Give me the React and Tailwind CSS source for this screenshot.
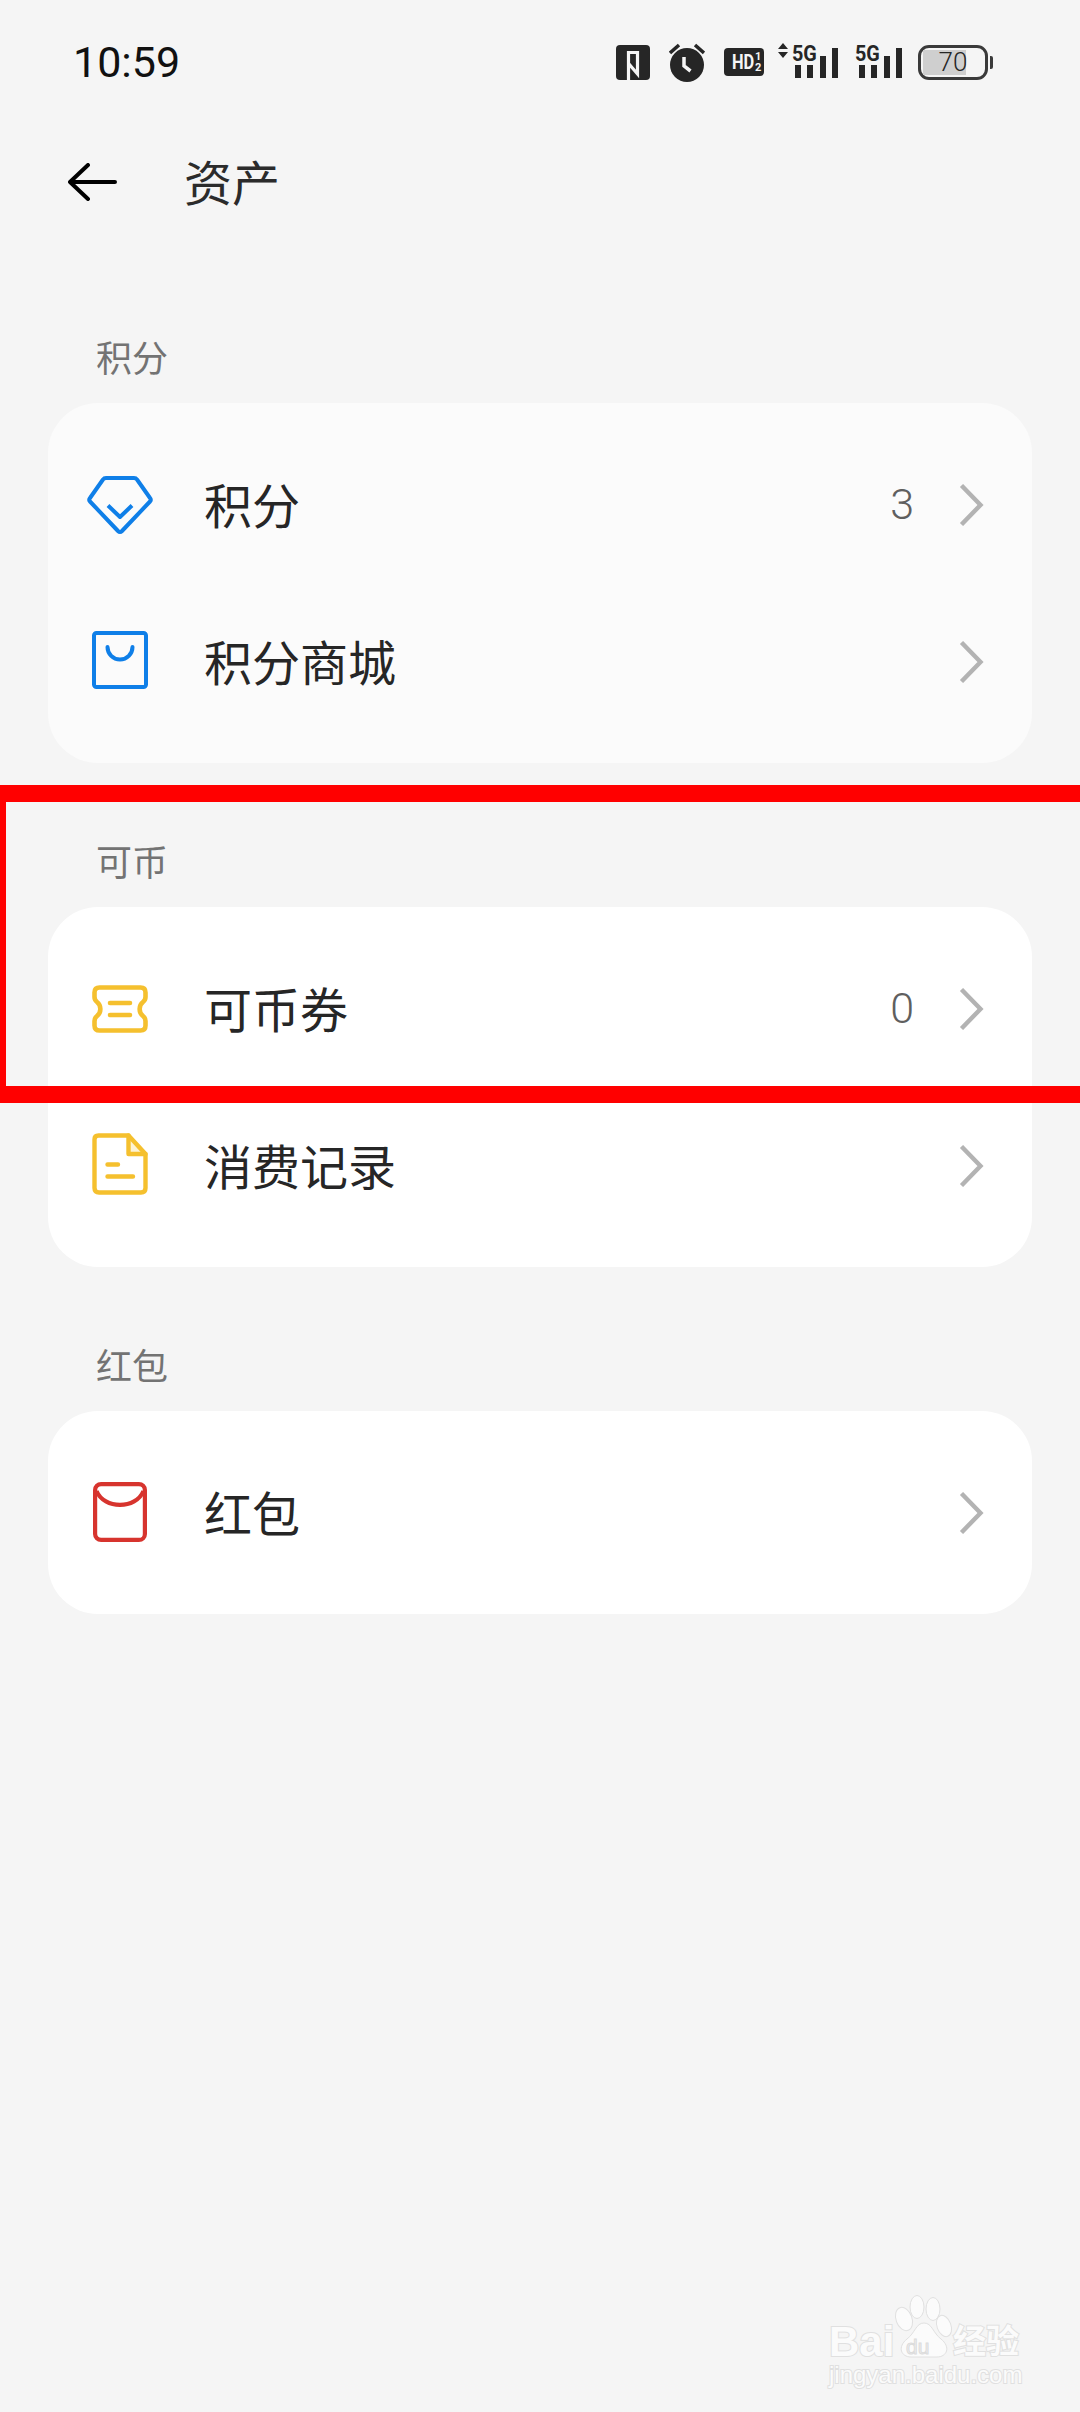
const cjk = "font-['Noto_Sans_CJK_SC','Noto_Sans',sans-serif]";

function Chevron() {
  return (
    <svg width="26" height="42" viewBox="0 0 26 42" fill="none" stroke="#b3b3b3" strokeWidth="4.4" className="shrink-0">
      <path d="M2.5 1.500 L21.500 21 L2.500 40.500" />
    </svg>
  );
}

function Diamond() {
  return (
    <svg width="66" height="58" viewBox="0 0 66 58" fill="none" stroke="#0f7fe8" strokeWidth="4" strokeLinejoin="round" strokeLinecap="round">
      <path d="M19 2 H47 Q49 2 50 3.500 L63 22 Q64.500 24 63 25.500 L35 55 Q33 57 31 55 L3 25.500 Q1.500 24 3 22 L16 3.500 Q17 2 19 2 Z" />
      <path d="M21 29.500 L33 41 L45 29.500" strokeLinecap="butt" />
    </svg>
  );
}

function Bag() {
  return (
    <svg width="56" height="58" viewBox="0 0 56 58" fill="none" stroke="#0f7fe8" strokeWidth="4" strokeLinejoin="round" className="mb-[4px]">
      <rect x="2" y="2" width="52" height="54" rx="2.500" />
      <path d="M15.500 16 A12.500 12.500 0 0 0 40.500 16" strokeLinecap="round" />
    </svg>
  );
}

function Ticket() {
  return (
    <svg width="56" height="48" viewBox="0 0 56 48" fill="none" stroke="#f5c02e" strokeWidth="4.600" strokeLinejoin="round" strokeLinecap="round">
      <path d="M7.500 2.500 H48.500 Q53.500 2.500 53.500 7.500 V12 Q53.500 15 51 17 C46.500 20.500 46.500 27.500 51 31 Q53.500 33 53.500 36 V40.500 Q53.500 45.500 48.500 45.500 H7.500 Q2.500 45.500 2.500 40.500 V36 Q2.500 33 5 31 C9.500 27.500 9.500 20.500 5 17 Q2.500 15 2.500 12 V7.500 Q2.500 2.500 7.500 2.500 Z" />
      <path d="M18 18 H38 M18 30 H38" />
    </svg>
  );
}

function Doc() {
  return (
    <svg width="56" height="62" viewBox="0 0 56 62" fill="none" stroke="#f5c02e" strokeWidth="4.400" strokeLinejoin="round" strokeLinecap="round" className="mb-[4px]">
      <path d="M36.500 2.500 L53.500 21 H36.500 Z" fill="#fdf3d3" stroke="none" />
      <path d="M6.500 2.500 H36.500 L53.500 21 V55 Q53.500 59.500 49 59.500 H7 Q2.500 59.500 2.500 55 V6.500 Q2.500 2.500 6.500 2.500 Z" />
      <path d="M36.500 2.500 V21 H53.500" />
      <path d="M15.500 31.500 H26 M15.500 43.500 H41" />
    </svg>
  );
}

function Envelope() {
  return (
    <svg width="54" height="60" viewBox="0 0 54 60" fill="none" stroke="#d7342e" strokeWidth="4.200" strokeLinejoin="round" className="mb-[2px]">
      <rect x="2.100" y="2.100" width="49.800" height="55.800" rx="6" />
      <path d="M3.500 9 C11 27.500 43 27.500 50.500 9" />
    </svg>
  );
}

function Row({ icon, label, value }) {
  return (
    <div className="flex h-[157px] items-center">
      <div className="mr-[12px] flex w-[144px] shrink-0 justify-center">{icon}</div>
      <span className={`${cjk} mb-[4px] text-[48px] leading-none text-[#262626]`}>{label}</span>
      {value !== undefined && (
        <span className="ml-auto mr-[45px] font-['Roboto',sans-serif] text-[43px] font-light leading-none text-[#5f5f5f]">{value}</span>
      )}
      <div className={`mr-[47px] flex items-center ${value === undefined ? "ml-auto" : ""}`}><Chevron /></div>
    </div>
  );
}

function Section({ title, children, tone = "bg-white" }) {
  return (
    <section>
      <div className={`${cjk} flex h-[48px] items-center pb-[3px] pl-[96px] text-[36px] leading-none text-[#737373]`}>{title}</div>
      <div className={`mx-[48px] mt-[22px] rounded-[50px] py-[23px] ${tone}`}>{children}</div>
    </section>
  );
}

function Signal({ className }) {
  return (
    <div className={`relative h-[31px] ${className}`}>
      <span className="absolute left-0 top-[-5px] origin-left font-['Roboto',sans-serif] text-[22px] font-bold leading-[24px] text-[#262626] [transform:scaleX(0.9)]">5G</span>
      <div className="absolute bottom-0 right-0 flex items-end gap-[6.500px]">
        <div className="h-[13px] w-[6px] bg-[#262626]" />
        <div className="h-[13px] w-[6px] bg-[#262626]" />
        <div className="h-[22px] w-[6px] bg-[#262626]" />
        <div className="h-[30px] w-[6px] bg-[#262626]" />
      </div>
    </div>
  );
}

function StatusIcons() {
  return (
    <div className="flex items-center">
      <svg width="34" height="35" viewBox="0 0 34 35" className="mr-[19px]">
        <rect width="34" height="35" rx="4" fill="#262626" />
        <path d="M12.500 35 V7.500 H21.500 V29 L13 19" fill="none" stroke="#f5f5f5" strokeWidth="3.200" />
      </svg>
      <svg width="36" height="39" viewBox="0 0 36 39" className="mr-[19px]">
        <circle cx="18" cy="22" r="17" fill="#262626" />
        <path d="M1 10 L10 2 M35 10 L26 2" stroke="#262626" strokeWidth="3.500" />
        <path d="M15 14 V23 L21.500 28" fill="none" stroke="#f5f5f5" strokeWidth="3.500" />
      </svg>
      <div className="mr-[14px] flex h-[28px] w-[40px] items-center justify-center gap-[1px] rounded-[4px] bg-[#262626] font-['Roboto',sans-serif] font-bold leading-none text-[#f5f5f5]">
        <span className="origin-right text-[20px] [transform:scaleX(0.82)]">HD</span>
        <span className="flex flex-col text-[11px] leading-[11px]"><span>1</span><span>2</span></span>
      </div>
      <svg width="10" height="15" viewBox="0 0 10 15" className="mb-[4px] mr-[4px] self-start">
        <path d="M5 0 L10 6 H0 Z M5 15 L10 9 H0 Z" fill="#262626" />
      </svg>
      <Signal className="mr-[17px] w-[46px]" />
      <Signal className="mr-[16px] w-[47px]" />
      <div className="relative flex h-[35px] w-[70px] items-center rounded-[11px] border-[3px] border-[#3a3a3a] p-[2px]">
        <div className="h-full w-[43px] bg-[#cfcfcf]" />
        <span className="absolute inset-0 flex items-center justify-center font-['Roboto',sans-serif] text-[26px] font-light leading-none text-[#262626]">70</span>
      </div>
      <div className="ml-[2px] h-[13px] w-[3px] rounded-r-[2px] bg-[#3a3a3a]" />
    </div>
  );
}

const wmText = "[-webkit-text-stroke:2px_#e0e0e0] [paint-order:stroke_fill]";

function Watermark() {
  return (
    <div className="absolute left-[829px] top-[2295px] h-[94px] w-[192px] text-[#fbfbfb]">
      <svg width="60" height="64" viewBox="0 0 60 64" className="absolute left-[65px] top-0" fill="#fbfbfb" stroke="#e0e0e0" strokeWidth="1">
        <ellipse cx="10" cy="24" rx="8" ry="12" transform="rotate(-20 10 24)" />
        <ellipse cx="23" cy="12" rx="7" ry="11.500" />
        <ellipse cx="39" cy="14" rx="7" ry="11.500" />
        <ellipse cx="50" cy="31" rx="7" ry="11" transform="rotate(-20 50 31)" />
        <path d="M30 28 C38 28 39 38 47 44 C57 52 53 62 43 62 H17 C7 62 3 52 13 44 C21 38 22 28 30 28 Z" />
      </svg>
      <span className={`absolute left-0 top-[26px] font-['Liberation_Sans',sans-serif] text-[42px] font-bold leading-none ${wmText}`}>Bai</span>
      <span className={`absolute left-[77px] top-[41px] font-['Liberation_Sans',sans-serif] text-[21px] leading-none text-[#efefef] [-webkit-text-stroke:1px_#dcdcdc]`}>du</span>
      <span className={`${cjk} absolute left-[124px] top-[28px] text-[33px] font-bold leading-none ${wmText}`}>经验</span>
      <span className={`absolute left-0 top-[68px] font-['Liberation_Sans',sans-serif] text-[24px] leading-none ${wmText}`}>jingyan.baidu.com</span>
    </div>
  );
}

export default function App() {
  return (
    <div className="relative h-[2412px] w-[1080px] overflow-hidden bg-[#f5f5f5]">
      <header className="flex h-[124px] items-center justify-between pl-[73px] pr-[87px]">
        <span className="font-['Roboto',sans-serif] text-[43px] leading-none text-[#111]">10:59</span>
        <StatusIcons />
      </header>
      <div className="flex h-[116px] items-center">
        <svg width="50" height="38" viewBox="0 0 50 38" fill="none" stroke="#000" strokeWidth="4" strokeLinecap="round" strokeLinejoin="round" className="ml-[68px]">
          <path d="M2 19 H47 M20 2 L2 19 L20 36" />
        </svg>
        <span className={`${cjk} mb-[5px] ml-[66px] text-[48px] leading-none text-[#2b2b2b]`}>资产</span>
      </div>
      <div className="flex flex-col gap-[74px] pt-[93px]">
        <Section title="积分" tone="bg-[#fbfbfb]">
          <Row icon={<Diamond />} label="积分" value="3" />
          <Row icon={<Bag />} label="积分商城" />
        </Section>
        <Section title="可币">
          <Row icon={<Ticket />} label="可币券" value="0" />
          <Row icon={<Doc />} label="消费记录" />
        </Section>
        <Section title="红包">
          <Row icon={<Envelope />} label="红包" />
        </Section>
      </div>
      <div className="absolute left-0 top-[785px] h-[318px] w-[1080px] border-y-[17px] border-l-[6px] border-[#ff0000]" />
      <Watermark />
    </div>
  );
}
